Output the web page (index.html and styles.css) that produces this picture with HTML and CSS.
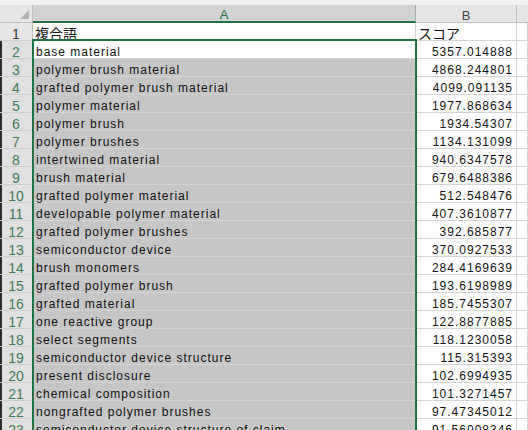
FILE: index.html
```html
<!DOCTYPE html>
<html lang="ja">
<head>
<meta charset="utf-8">
<link rel="stylesheet" href="styles.css">
</head>
<body>
<div class="sheet">
  <div class="topstrip"></div>
  <div class="grid">
    <div class="corner"><span class="tri"></span></div>
    <div class="colhead sel">A</div>
    <div class="colhead">B</div>
    <div class="colhead blank"></div>

    <div class="rowhead">1</div>
    <div class="cell jp">複合語</div>
    <div class="cell jp">スコア</div>
    <div class="cell"></div>

    <div class="rowhead on">2</div><div class="cell a active">base material</div><div class="cell num">5357.014888</div><div class="cell"></div>
    <div class="rowhead on">3</div><div class="cell a">polymer brush material</div><div class="cell num">4868.244801</div><div class="cell"></div>
    <div class="rowhead on">4</div><div class="cell a">grafted polymer brush material</div><div class="cell num">4099.091135</div><div class="cell"></div>
    <div class="rowhead on">5</div><div class="cell a">polymer material</div><div class="cell num">1977.868634</div><div class="cell"></div>
    <div class="rowhead on">6</div><div class="cell a">polymer brush</div><div class="cell num">1934.54307</div><div class="cell"></div>
    <div class="rowhead on">7</div><div class="cell a">polymer brushes</div><div class="cell num">1134.131099</div><div class="cell"></div>
    <div class="rowhead on">8</div><div class="cell a">intertwined material</div><div class="cell num">940.6347578</div><div class="cell"></div>
    <div class="rowhead on">9</div><div class="cell a">brush material</div><div class="cell num">679.6488386</div><div class="cell"></div>
    <div class="rowhead on">10</div><div class="cell a">grafted polymer material</div><div class="cell num">512.548476</div><div class="cell"></div>
    <div class="rowhead on">11</div><div class="cell a">developable polymer material</div><div class="cell num">407.3610877</div><div class="cell"></div>
    <div class="rowhead on">12</div><div class="cell a">grafted polymer brushes</div><div class="cell num">392.685877</div><div class="cell"></div>
    <div class="rowhead on">13</div><div class="cell a">semiconductor device</div><div class="cell num">370.0927533</div><div class="cell"></div>
    <div class="rowhead on">14</div><div class="cell a">brush monomers</div><div class="cell num">284.4169639</div><div class="cell"></div>
    <div class="rowhead on">15</div><div class="cell a">grafted polymer brush</div><div class="cell num">193.6198989</div><div class="cell"></div>
    <div class="rowhead on">16</div><div class="cell a">grafted material</div><div class="cell num">185.7455307</div><div class="cell"></div>
    <div class="rowhead on">17</div><div class="cell a">one reactive group</div><div class="cell num">122.8877885</div><div class="cell"></div>
    <div class="rowhead on">18</div><div class="cell a">select segments</div><div class="cell num">118.1230058</div><div class="cell"></div>
    <div class="rowhead on">19</div><div class="cell a">semiconductor device structure</div><div class="cell num">115.315393</div><div class="cell"></div>
    <div class="rowhead on">20</div><div class="cell a">present disclosure</div><div class="cell num">102.6994935</div><div class="cell"></div>
    <div class="rowhead on">21</div><div class="cell a">chemical composition</div><div class="cell num">101.3271457</div><div class="cell"></div>
    <div class="rowhead on">22</div><div class="cell a">nongrafted polymer brushes</div><div class="cell num">97.47345012</div><div class="cell"></div>
    <div class="rowhead on">23</div><div class="cell a">semiconductor device structure of claim</div><div class="cell num">91.56008346</div><div class="cell"></div>
  </div>
  <div class="selection"></div>
</div>
</body>
</html>
```

FILE: styles.css
```css
* { box-sizing: border-box; margin: 0; padding: 0; }
html, body { width: 528px; height: 430px; overflow: hidden; background: #ffffff; }
body { font-family: "Liberation Sans", Arial, sans-serif; }

.sheet { position: relative; width: 528px; height: 430px; overflow: hidden; }

.topstrip { height: 5px; background: #f1f1f1; }

.grid {
  display: grid;
  grid-template-columns: 33px 383px 101px 1fr;
  grid-template-rows: 18px;
  grid-auto-rows: 18px;
}

.corner {
  position: relative;
  background: #e6e6e6;
  border-right: 1px solid #bdbdbd;
  border-bottom: 1px solid #bdbdbd;
}
.tri {
  position: absolute;
  right: 3px;
  bottom: 3px;
  width: 0; height: 0;
  border-left: 9px solid transparent;
  border-bottom: 9px solid #b4b4b4;
}

.colhead {
  background: #e6e6e6;
  border-right: 1px solid #bdbdbd;
  border-bottom: 1px solid #bdbdbd;
  color: #444444;
  font-size: 13px;
  display: flex;
  align-items: center;
  justify-content: center;
  padding-top: 3px;
}
.colhead.sel {
  background: #d2d2d2;
  color: #217346;
  border-bottom: 2px solid #217346;
  border-right-color: #a8a8a8;
}
.colhead.blank { border-right: none; }

.rowhead {
  background: #e6e6e6;
  border-right: 1px solid #bdbdbd;
  border-bottom: 1px solid #cfcfcf;
  color: #333333;
  font-size: 14px;
  line-height: 14px;
  display: flex;
  align-items: center;
  justify-content: center;
  padding-top: 4px;
}
.rowhead.on {
  background: #e0e0e0;
  color: #3f7a57;
  border-right-color: #217346;
  box-shadow: inset 2px 0 0 #2b2b2b;
}

.cell {
  border-right: 1px solid #d4d4d4;
  border-bottom: 1px solid #d4d4d4;
  font-size: 12px;
  letter-spacing: 1px;
  color: #111111;
  white-space: nowrap;
  overflow: hidden;
  display: flex;
  align-items: flex-end;
  padding: 0 0 0 3px;
  line-height: 12px;
}
.cell.jp {
  font-family: "Noto Sans CJK JP", sans-serif;
  font-size: 14px;
  letter-spacing: 0;
  padding-left: 2px;
  line-height: 14px;
  overflow: visible;
}
.cell.a {
  background: #c6c6c6;
  border-bottom-color: #d2d2d2;
  border-right-color: #c6c6c6;
  overflow: visible;
}
.cell.a.active { background: #ffffff; }
.cell.num {
  justify-content: flex-end;
  padding-right: 3px;
  letter-spacing: 1px;
}

.selection {
  position: absolute;
  left: 32px;
  top: 39px;
  width: 385px;
  height: 400px;
  border: 2px solid #217346;
  pointer-events: none;
}
```
